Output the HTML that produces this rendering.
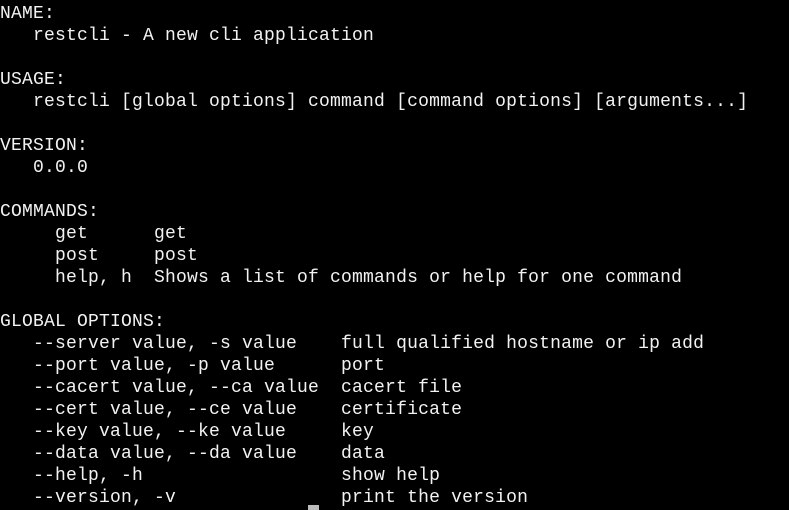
<!DOCTYPE html>
<html><head><meta charset="utf-8"><style>
html,body{margin:0;padding:0;background:#000;width:789px;height:510px;overflow:hidden}
pre{margin:0;position:absolute;left:0;top:3px;font-family:"Liberation Mono",monospace;font-size:18px;letter-spacing:0.2px;line-height:22px;color:#f2f2f2}
#cur{position:absolute;left:308px;top:505px;width:11px;height:5px;background:#bbb}
</style></head><body>
<pre>NAME:
   restcli - A new cli application

USAGE:
   restcli [global options] command [command options] [arguments...]

VERSION:
   0.0.0

COMMANDS:
     get      get
     post     post
     help, h  Shows a list of commands or help for one command

GLOBAL OPTIONS:
   --server value, -s value    full qualified hostname or ip add
   --port value, -p value      port
   --cacert value, --ca value  cacert file
   --cert value, --ce value    certificate
   --key value, --ke value     key
   --data value, --da value    data
   --help, -h                  show help
   --version, -v               print the version</pre>
<div id="cur"></div>
</body></html>
